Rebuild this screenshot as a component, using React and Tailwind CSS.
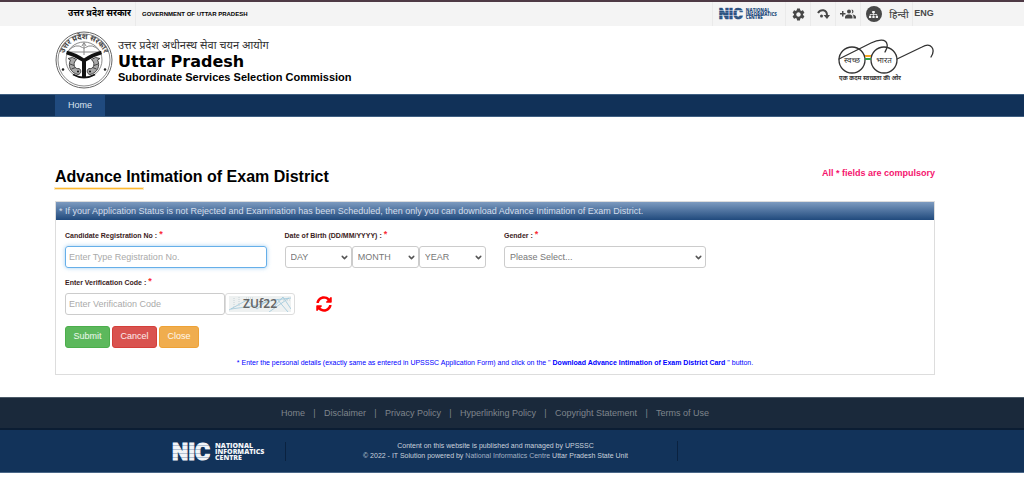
import { ChevronDown } from "lucide-react";
import { FaSitemap, FaSyncAlt } from "react-icons/fa";
import { MdSettings } from "react-icons/md";

const footerLinks = [
  "Home",
  "Disclaimer",
  "Privacy Policy",
  "Hyperlinking Policy",
  "Copyright Statement",
  "Terms of Use",
];

function Container({ className = "", children }) {
  return <div className={`pl-[55px] pr-[89px] ${className}`}>{children}</div>;
}

function NicLogo({ id, className, stops }) {
  return (
    <svg
      viewBox="0 0 98 19"
      className={`overflow-visible ${className}`}
      role="img"
      aria-label="National Informatics Centre"
    >
      <defs>
        <linearGradient id={id} x1="0" y1="0" x2="0" y2="4" gradientUnits="userSpaceOnUse" spreadMethod="repeat">
          <stop offset="0" stopColor={stops[0]} />
          <stop offset="0.75" stopColor={stops[0]} />
          <stop offset="0.85" stopColor={stops[1]} />
          <stop offset="1" stopColor={stops[1]} />
        </linearGradient>
      </defs>
      <text
        x="1"
        y="18"
        fontFamily="Roboto, sans-serif"
        fontWeight="900"
        fontSize="23"
        fill={`url(#${id})`}
        stroke={`url(#${id})`}
        strokeWidth="1"
      >
        NIC
      </text>
      <g fontFamily="'Open Sans', sans-serif" fontWeight="800" fontSize="7" fill={stops[0]}>
        <text x="44" y="6">NATIONAL</text>
        <text x="44" y="12">INFORMATICS</text>
        <text x="44" y="18">CENTRE</text>
      </g>
    </svg>
  );
}

function Emblem() {
  return (
    <svg viewBox="0 0 116 116" className="size-[58px] shrink-0" role="img" aria-label="उत्तर प्रदेश सरकार">
      <defs>
        <path id="emblem-arc" d="M18 71 A42 42 0 1 1 98 71" />
      </defs>
      <g fill="none" stroke="#666">
        <circle cx="58" cy="58" r="56" strokeWidth="2" />
        <circle cx="58" cy="58" r="52" strokeWidth="1.5" />
        <circle cx="58" cy="58" r="36" strokeWidth="1.5" />
      </g>
      <text
        fontFamily="'Noto Sans', 'Noto Sans Devanagari', sans-serif"
        fontWeight="700"
        fontSize="15"
        fill="#444"
        textAnchor="middle"
      >
        <textPath href="#emblem-arc" startOffset="50%">उत्तर प्रदेश सरकार</textPath>
      </text>
      <circle cx="16" cy="77" r="2.5" fill="#222" />
      <circle cx="100" cy="77" r="2.5" fill="#222" />
      {/* bow and arrow */}
      <g fill="none" stroke="#888" strokeWidth="2">
        <path d="M27 39 Q42 24 55 33 Q58 36 61 33 Q74 24 89 39" />
        <path d="M28 42 H88" />
        <path d="M58 24 V48 M54 30 L58 23 L62 30" />
      </g>
      {/* confluence of rivers */}
      <g fill="none" stroke="#111">
        <path d="M23 43 Q42 48 58 59 Q74 48 93 43" strokeWidth="7" />
        <path d="M58 56 V93" strokeWidth="8" />
        <path d="M36 87 Q58 99 80 87" strokeWidth="3" />
      </g>
      {/* pair of fish */}
      <g fill="#aaa" stroke="#444" strokeWidth="2">
        <path d="M31 58 C25 69 31 84 46 87 C53 86 53 77 48 75 C42 77 36 71 39 62 L43 57 L35 53 L26 55 Z" />
        <path d="M85 58 C91 69 85 84 70 87 C63 86 63 77 68 75 C74 77 80 71 77 62 L73 57 L81 53 L90 55 Z" />
        <path d="M30 66 L38 69 M33 76 L41 73 M86 66 L78 69 M83 76 L75 73" />
      </g>
      <circle cx="46" cy="81" r="2" fill="#111" />
      <circle cx="70" cy="81" r="2" fill="#111" />
    </svg>
  );
}

function SwachhBharat() {
  return (
    <svg viewBox="0 0 97 43" className="h-[43px] w-[97px]" role="img" aria-label="स्वच्छ भारत">
      <g fill="none" stroke="#333" strokeWidth="1.3" strokeLinecap="round">
        <circle cx="14" cy="21" r="13" />
        <circle cx="46" cy="21" r="13" />
        <path d="M1 20 L33 4 C41 0 48 0 49 5 C50 8 48 11 47 13" />
        <path d="M59 20 L84 8 C93 3 98 10 93 18" />
      </g>
      <path d="M27 17 H33" stroke="#f5a623" strokeWidth="2" />
      <path d="M27 20 H33" stroke="#2e9e4a" strokeWidth="2" />
      <g fontFamily="'Noto Sans', 'Noto Sans Devanagari', sans-serif" fill="#333" textAnchor="middle">
        <text x="14" y="24" fontSize="8">स्वच्छ</text>
        <text x="46" y="24" fontSize="8">भारत</text>
        <text x="32" y="41" fontSize="6" fontWeight="700">एक कदम स्वच्छता की ओर</text>
      </g>
    </svg>
  );
}

function SkipIcon() {
  return (
    <svg viewBox="0 0 26 20" className="h-[10px] w-[13px]" fill="none" stroke="#484848">
      <path d="M2 8 C7 0 20 0 20 13" strokeWidth="4" />
      <path d="M13 12 H26 L20 20 Z" fill="#484848" stroke="none" />
      <circle cx="9" cy="14" r="3" fill="#484848" stroke="none" />
    </svg>
  );
}

function GroupAddIcon() {
  return (
    <svg viewBox="0 0 32 20" className="h-[10px] w-4" fill="#484848">
      <path d="M4 4 H7 V8 H11 V11 H7 V15 H4 V11 H0 V8 H4 Z" />
      <circle cx="18" cy="5" r="4" />
      <path d="M23 1 a4 4 0 1 1 0 8 a7 7 0 0 0 0 -8 Z" />
      <path d="M10 19 V16 C10 12 15 11 18 11 S25 12 25 16 V19 Z" />
      <path d="M27 19 V16 C27 14 26 12 25 11 C28 11 32 13 32 16 V19 Z" />
    </svg>
  );
}

function Label({ htmlFor, children }) {
  return (
    <label htmlFor={htmlFor} className="mb-1 block h-3 text-[7px] leading-3 font-bold text-[#3b1c1c]">
      {children} : <span className="align-top text-[9px] leading-[8px] text-red-500">*</span>
    </label>
  );
}

function Select({ id, label, placeholder }) {
  return (
    <div className="relative min-w-0 flex-1">
      <select
        id={id}
        aria-label={label}
        className="block h-[22px] w-full appearance-none rounded-[3px] border border-[#ccc] bg-white pt-px pl-[5px] text-[9px] text-[#777]"
      >
        <option>{placeholder}</option>
      </select>
      <ChevronDown
        size={9}
        strokeWidth={4}
        className="pointer-events-none absolute top-[7px] right-[3px] text-[#555]"
      />
    </div>
  );
}

function Captcha() {
  return (
    <svg viewBox="0 0 62 16" className="h-4 w-[62px]" role="img" aria-label="Verification code">
      <rect width="62" height="16" fill="#eef1f1" />
      <g fill="none" stroke="#9cc6da" strokeWidth="0.8">
        <path d="M0 14 L18 4 L28 13 L40 3" />
        <path d="M2 13 L24 10 L45 4 L62 2" />
        <path d="M40 16 L60 2 M48 3 L59 16 M44 12 L54 1 L62 13" />
      </g>
      <path d="M5 2 V14 M10 1 V10 M17 2 H25 M54 4 H61" stroke="#c6d2d6" strokeDasharray="1 1" />
      <text
        x="31"
        y="12"
        textAnchor="middle"
        fontFamily="'Noto Sans', sans-serif"
        fontWeight="600"
        fontSize="12"
        fill="#666"
      >
        ZUf22
      </text>
    </svg>
  );
}

function TopBar() {
  return (
    <div className="border-t-2 border-[#4e3a45] bg-[#f4f4f4]">
      <Container className="flex h-6 items-center justify-between">
        <div className="flex h-full items-center text-black">
          <a
            href="#hi"
            className="flex h-full items-center border-r border-[#eaeaea] pr-1 pl-[13px] text-[9px] font-bold"
          >
            उत्तर प्रदेश सरकार
          </a>
          <a href="#en" className="pl-[6px] text-[6px] font-bold">
            GOVERNMENT OF UTTAR PRADESH
          </a>
        </div>
        <div className="flex h-full items-center text-[#484848] [&>*]:flex [&>*]:h-full [&>*]:items-center [&>*]:justify-center">
          <a href="#nic" className="w-[74px] border-x border-[#eaeaea]">
            <NicLogo id="nic-top" className="h-3 w-[64px]" stops={["#29507f", "#8fa5be"]} />
          </a>
          <button type="button" aria-label="Settings" className="w-[25px] border-r border-[#eaeaea]">
            <MdSettings size={15} />
          </button>
          <a href="#content" aria-label="Skip to content" className="w-[25px] border-r border-[#eaeaea]">
            <SkipIcon />
          </a>
          <a href="#social" aria-label="Social" className="w-[25px] border-r border-[#eaeaea]">
            <GroupAddIcon />
          </a>
          <a href="#sitemap" aria-label="Sitemap" className="w-[25px]">
            <span className="flex size-4 items-center justify-center rounded-full bg-[#484848] text-[#f4f4f4]">
              <FaSitemap size={9} />
            </span>
          </a>
          <a href="#hindi" className="w-[27px] border-r border-[#eaeaea] text-[10px] font-medium">
            हिन्दी
          </a>
          <a href="#eng" className="w-[22px] text-[9px] font-bold">
            ENG
          </a>
        </div>
      </Container>
    </div>
  );
}

export default function App() {
  return (
    <div className="bg-white font-['Liberation_Sans','Noto_Sans_Devanagari',sans-serif] text-[9px] text-black">
      <TopBar />

      <header>
        <Container className="flex h-[68px] items-center justify-between">
          <a href="#home" className="flex items-center gap-[5px]">
            <Emblem />
            <span className="block">
              <span className="block text-[11px] leading-4 text-[#333]">उत्तर प्रदेश अधीनस्थ सेवा चयन आयोग</span>
              <span className="block font-['DejaVu_Sans',sans-serif] text-[16px] leading-[18px] font-bold">
                Uttar Pradesh
              </span>
              <span className="block text-[11px] leading-3 font-bold">
                Subordinate Services Selection Commission
              </span>
            </span>
          </a>
          <SwachhBharat />
        </Container>
        <nav className="border-y border-[#3f5f82] bg-[#113158]">
          <Container className="flex">
            <a href="#home" className="bg-[#204a7e] px-[13px] text-[9px] leading-[21px] text-[#dce4ee]">
              Home
            </a>
          </Container>
        </nav>
      </header>

      <main id="content">
        <Container className="pt-[50px] pb-[22px]">
          <div className="flex items-start justify-between">
            <h1 className="text-[16px] leading-5 font-bold">
              Advance Intimation of Exam District
              <span className="mt-px block h-px w-[88px] bg-[#fdb933] outline outline-[#fdd27a]/50" />
            </h1>
            <p className="text-[9px] leading-3 font-bold text-[#f5146e]">All * fields are compulsory</p>
          </div>

          <section className="mt-3 border border-[#ddd]">
            <p className="bg-linear-to-b from-[#7d9bc0] to-[#204a7d] px-[3px] text-[9px] leading-[18px] text-[#d3deec]">
              * If your Application Status is not Rejected and Examination has been Scheduled, then only you can
              download Advance Intimation of Exam District.
            </p>
            <form className="pt-[10px] pb-[5px]" onSubmit={(e) => e.preventDefault()}>
              <div className="grid grid-cols-4 [&>*]:px-[9px]">
                <div>
                  <Label htmlFor="regNo">Candidate Registration No</Label>
                  <input
                    id="regNo"
                    type="text"
                    placeholder="Enter Type Registration No."
                    className="block h-[22px] w-full rounded-[3px] border border-[#66afe9] px-[3px] text-[9px] shadow-[0_0_4px_rgba(102,175,233,0.6)] outline-none placeholder:text-[#aaa]"
                  />
                </div>
                <div>
                  <Label htmlFor="day">Date of Birth (DD/MM/YYYY)</Label>
                  <div className="flex">
                    <Select id="day" label="Day" placeholder="DAY" />
                    <Select id="month" label="Month" placeholder="MONTH" />
                    <Select id="year" label="Year" placeholder="YEAR" />
                  </div>
                </div>
                <div>
                  <Label htmlFor="gender">Gender</Label>
                  <Select id="gender" label="Gender" placeholder="Please Select..." />
                </div>
              </div>

              <div className="px-[9px] pt-[9px]">
                <Label htmlFor="code">Enter Verification Code</Label>
                <div className="flex items-center">
                  <input
                    id="code"
                    type="text"
                    placeholder="Enter Verification Code"
                    className="block h-[22px] w-40 rounded-[3px] border border-[#ccc] px-[3px] text-[9px] outline-none placeholder:text-[#aaa]"
                  />
                  <span className="flex h-[22px] w-[70px] items-center justify-center rounded-[3px] border border-[#ddd]">
                    <Captcha />
                  </span>
                  <button type="button" aria-label="Refresh code" className="ml-[21px] text-[#f00]">
                    <FaSyncAlt size={16} />
                  </button>
                </div>
                <div className="mt-[11px] flex gap-[2px] text-[9px] text-white/90 [&>*]:h-[22px] [&>*]:rounded-[3px] [&>*]:border">
                  <button type="submit" className="w-[45px] border-[#4cae4c] bg-[#5cb85c]">
                    Submit
                  </button>
                  <button type="reset" className="w-[45px] border-[#d43f3a] bg-[#d9534f]">
                    Cancel
                  </button>
                  <button type="button" className="w-10 border-[#eea236] bg-[#f0ad4e]">
                    Close
                  </button>
                </div>
              </div>
              <p className="pt-[9px] text-center text-[7px] leading-3 text-[#00f]">
                * Enter the personal details (exactly same as entered in UPSSSC Application Form) and click on the "{" "}
                <strong>Download Advance Intimation of Exam District Card</strong> " button.
              </p>
            </form>
          </section>
        </Container>
      </main>

      <footer>
        <div className="border-t border-b-2 border-t-[#4b5a68] border-b-[#0b1d33] bg-[#1a293b]">
          <Container>
            <ul className="flex justify-center text-[9px] leading-[30px] text-[#7f858c]">
              {footerLinks.map((link, i) => (
                <li key={link} className="flex">
                  {i > 0 && <span className="w-[19px] text-center">|</span>}
                  <a href="#footer">{link}</a>
                </li>
              ))}
            </ul>
          </Container>
        </div>
        <div className="border-b border-[#4a6788] bg-[#12335a]">
          <Container className="grid h-[42px] grid-cols-[231fr_391fr_258fr] items-center">
            <div className="flex justify-end border-r border-[#0a2240] pr-4">
              <NicLogo id="nic-footer" className="h-[19px] w-[98px]" stops={["#f2f5f8", "#b3c0d0"]} />
            </div>
            <p className="pl-7 text-center text-[7px] leading-[10px] text-[#c9d2dd]">
              Content on this website is published and managed by UPSSSC
              <br />© 2022 - IT Solution powered by{" "}
              <a href="#nic" className="text-[#a3b2c4]">
                National Informatics Centre
              </a>{" "}
              Uttar Pradesh State Unit
            </p>
            <div className="h-5 border-l border-[#0a2240]" />
          </Container>
        </div>
      </footer>
    </div>
  );
}
